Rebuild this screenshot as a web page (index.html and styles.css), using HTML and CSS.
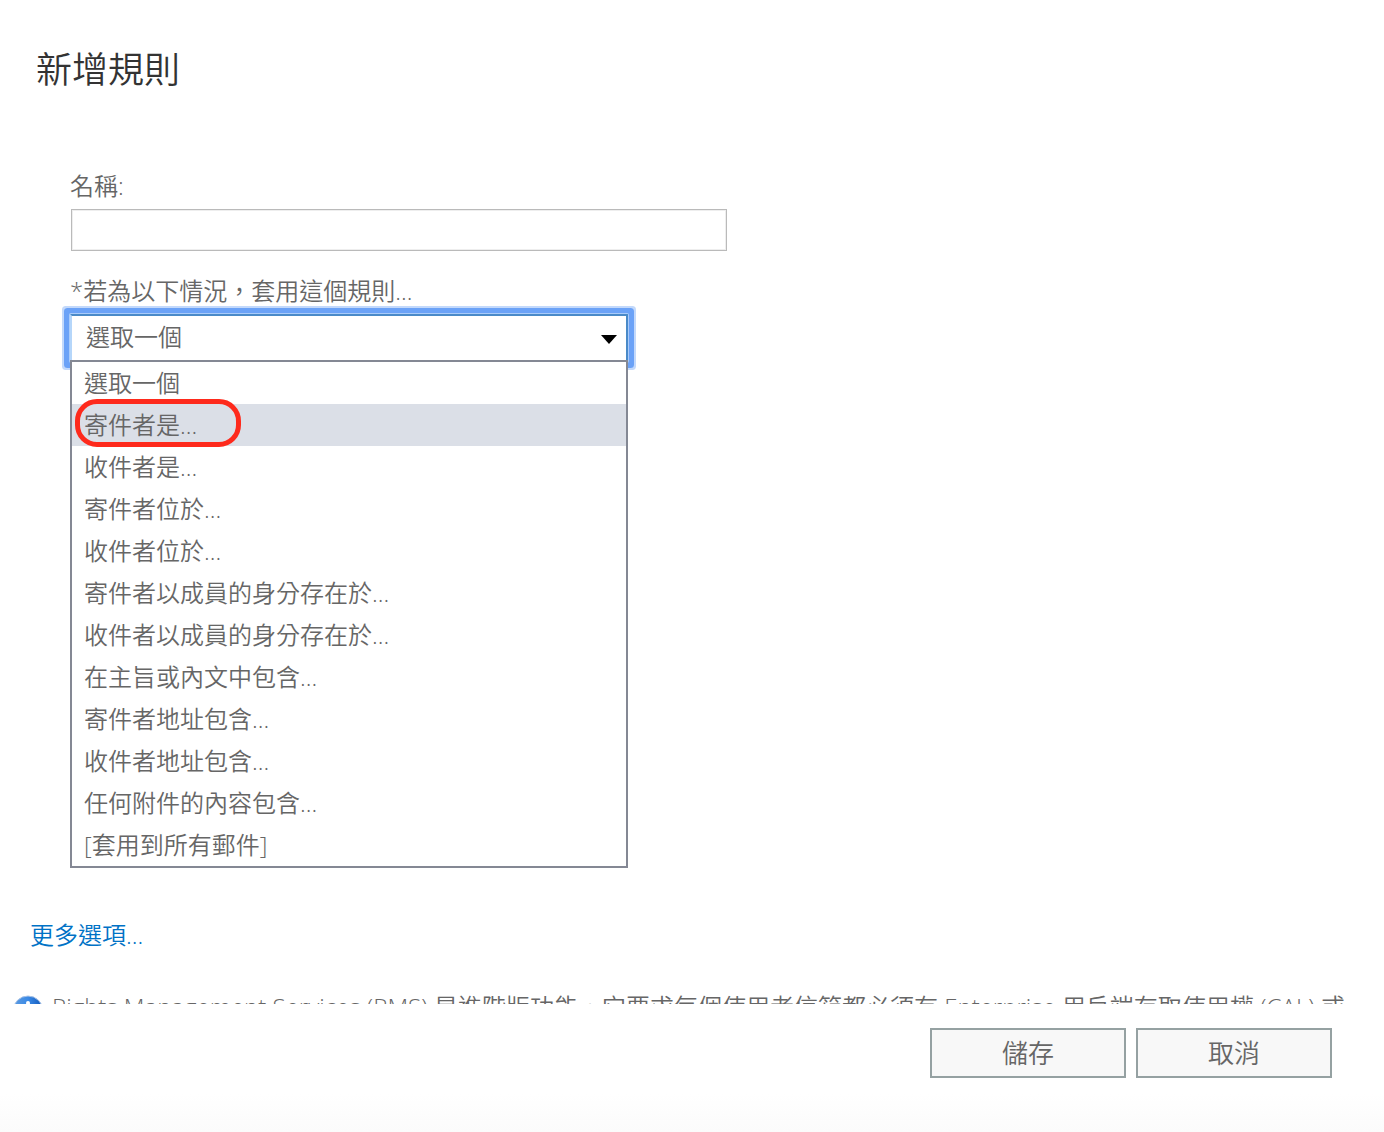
FILE: index.html
```html
<!DOCTYPE html>
<html lang="zh-Hant">
<head>
<meta charset="utf-8">
<meta name="viewport" content="width=device-width, initial-scale=1">
<title>新增規則</title>
<link rel="stylesheet" href="styles.css">
</head>
<body>

<form class="dialog">

<div class="content">
   <h1>新增規則</h1>

   <div class="fields">
      <label for="rule_name">名稱:</label>
      <input type="text" class="name" id="rule_name" name="rule_name">

      <label for="rule_cond">*若為以下情況，套用這個規則...</label>
      <div class="combo">
         <select class="condition" id="rule_cond" name="rule_cond">
            <option selected>選取一個</option>
         </select>
         <svg class="arrow" width="16" height="10" viewBox="0 0 16 10" aria-hidden="true"><path d="M0 1h16L8 10z" fill="#000"/></svg>

         <!-- opened list -->
         <ul class="menu">
            <li><button type="button">選取一個</button></li>
            <li class="current"><button type="button">寄件者是...</button></li>
            <li><button type="button">收件者是...</button></li>
            <li><button type="button">寄件者位於...</button></li>
            <li><button type="button">收件者位於...</button></li>
            <li><button type="button">寄件者以成員的身分存在於...</button></li>
            <li><button type="button">收件者以成員的身分存在於...</button></li>
            <li><button type="button">在主旨或內文中包含...</button></li>
            <li><button type="button">寄件者地址包含...</button></li>
            <li><button type="button">收件者地址包含...</button></li>
            <li><button type="button">任何附件的內容包含...</button></li>
            <li><button type="button">[套用到所有郵件]</button></li>
         </ul>
      </div>
   </div>

   <a class="more" href="#">更多選項...</a>

   <div class="note">
      <svg class="info" width="32" height="32" viewBox="0 0 32 32" aria-hidden="true">
         <defs>
            <linearGradient id="ball" x1="0" y1="0" x2="1" y2="0">
               <stop offset="0" stop-color="#5d9be0"/>
               <stop offset="0.5" stop-color="#3b8ae6"/>
               <stop offset="1" stop-color="#0f56b8"/>
            </linearGradient>
         </defs>
         <circle cx="16" cy="16" r="15" fill="url(#ball)" stroke="#a9c3e6" stroke-width="1"/>
         <circle cx="16" cy="8" r="2" fill="#fff"/>
         <path d="M14 13h4v12h-4z" fill="#fff"/>
      </svg>
      <p>Rights Management Services (RMS) 是進階版功能，它要求每個使用者信箱都必須有 Enterprise 用戶端存取使用權 (CAL) 或</p>
   </div>
</div>

<div class="footer">
   <button type="submit">儲存</button>
   <button type="button">取消</button>
</div>

</form>

</body>
</html>
```
FILE: styles.css
```css
*, *::after { box-sizing: border-box; }

body { margin: 0; background: #fff; color: #666;
font: 350 24px/32px "Open Sans", "Noto Sans CJK TC", sans-serif; }

input, select, button { font: inherit; color: inherit; }

.dialog { display: flex; flex-direction: column; height: 100vh; }

.content { flex: 1; min-height: 0; overflow: hidden; padding-top: 45px; }

h1 { margin: 0 36px 75px; font-size: 36px; line-height: 50px; font-weight: 350; color: #333; }

.fields { display: flex; flex-direction: column; align-items: flex-start;
min-height: 749px; padding: 0 70px; }

.fields label { margin-bottom: 7px; }

.name { width: 656px; max-width: 100%; height: 42px; margin: 0 0 24px 1px; padding: 0 12px;
border: 1px solid #bababa; outline: 0; box-shadow: inset 0 0 0 1px #eee; }

.combo { position: relative; width: 558px; max-width: 100%; }

.condition { display: block; appearance: none; width: 100%; height: 48px; padding: 0 14px 2px;
background: #fff; border: 2px solid #4a8ac8; border-left-color: #b5d6fa; outline: 0; border-radius: 1px;
box-shadow: 0 0 0 1px #a9cbfa, 0 0 0 6px #6ba2f7, 0 0 0 8px #c3d9fb; }

.arrow { position: absolute; right: 11px; top: 20px; pointer-events: none; }

.menu { position: absolute; top: 46px; left: 0; right: 0; z-index: 1;
margin: 0; padding: 0; list-style: none; background: #fff; border: 2px solid #848894; }

.menu li { position: relative; }

.menu button { display: block; width: 100%; height: 42px; padding: 0 12px;
border: 0; background: none; text-align: left; }

.menu .current { background: #dbdfe7; }

/* red marker round the chosen condition */
.menu .current::after { content: ""; position: absolute; left: 3px; top: -5px;
width: 166px; height: 48px; border: 5px solid #fe2a1c; border-radius: 22px; pointer-events: none; }

.more { display: block; width: fit-content; margin-left: 30px; color: #0072c6; text-decoration: none; }

.note { display: flex; gap: 8px; margin-top: 40px; padding-left: 12px; }

.info { flex: none; margin-top: 4px; }

.note p { margin: 0; white-space: nowrap; }

.footer { display: flex; justify-content: flex-end; gap: 10px; height: 128px; padding: 24px 52px;
background: linear-gradient(#fff 70%, #fbfbfb); }

.footer button { width: 196px; height: 50px; padding: 0; font-size: 26px;
background: #f8f8f8; border: 2px solid #95a1a2; }
```
